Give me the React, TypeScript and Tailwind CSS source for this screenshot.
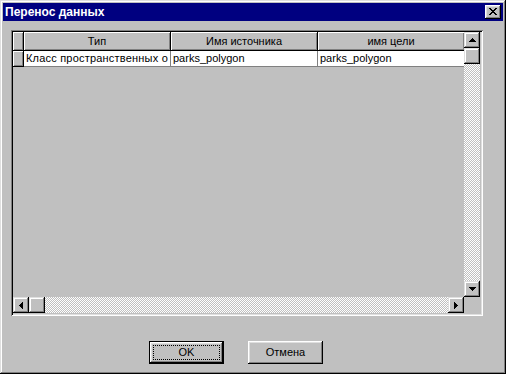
import React from "react";

const raised =
  "shadow-[inset_-1px_-1px_#000,inset_1px_1px_#dfdfdf,inset_-2px_-2px_#808080,inset_2px_2px_#fff]";
const btnBevel =
  "shadow-[inset_-1px_-1px_#000,inset_1px_1px_#fff,inset_-2px_-2px_#808080,inset_2px_2px_#dfdfdf]";
const checker =
  "bg-[image:repeating-conic-gradient(#c0c0c0_0_25%,#ffffff_0_50%)] bg-[length:2px_2px]";

function Arrow({ d, w, h }: { d: string; w: number; h: number }) {
  return (
    <svg width={w} height={h} viewBox={`0 0 ${w} ${h}`} shapeRendering="crispEdges">
      <path d={d} fill="#000" />
    </svg>
  );
}

const UP = "M3 0h1v1h1v1h1v1h1v1H0V3h1V2h1V1h1z";
const DOWN = "M0 0h7v1h-1v1h-1v1h-1v1h-1v-1h-1v-1h-1v-1h-1z";
const LEFT = "M3 0h1v7h-1v-1h-1v-1h-1v-1h-1v-1h1v-1h1v-1h1z";
const RIGHT = "M0 0h1v1h1v1h1v1h1v1h-1v1h-1v1h-1v1h-1z";

function ScrollBtn({ children }: { children?: React.ReactNode }) {
  return (
    <div className={`w-[16px] h-[16px] shrink-0 bg-[#c0c0c0] flex items-center justify-center ${raised}`}>
      {children}
    </div>
  );
}

function HeaderCell({ children, w }: { children?: React.ReactNode; w: string }) {
  return (
    <div
      className={`${w} h-full shrink-0 border-r border-b border-black bg-[#c0c0c0] shadow-[inset_1px_1px_#fff,inset_-1px_-1px_#808080] flex items-center justify-center text-[11px] text-black whitespace-nowrap overflow-hidden`}
    >
      {children}
    </div>
  );
}

function DataCell({ children, wide }: { children?: React.ReactNode; wide?: boolean }) {
  return (
    <div
      className={`w-[147px] h-full shrink-0 border-r border-b border-[#808080] bg-white flex items-center pl-[2px] text-[11px] text-black whitespace-nowrap overflow-hidden ${
        wide ? "tracking-[0.2px]" : ""
      }`}
    >
      {children}
    </div>
  );
}

export default function App() {
  return (
    <div
      className="w-[506px] h-[374px] bg-[#c0c0c0] p-[3px] flex flex-col font-['Liberation_Sans',Arial,sans-serif] shadow-[inset_-1px_-1px_#000,inset_1px_1px_#dfdfdf,inset_-2px_-2px_#808080,inset_2px_2px_#fff]"
    >
      {/* title bar */}
      <div className="h-[18px] bg-[#000080] flex items-center pl-[2px] pr-[2px] shrink-0">
        <span className="text-white font-bold text-[12px] leading-none">Перенос данных</span>
        <div className={`ml-auto w-[16px] h-[14px] bg-[#c0c0c0] flex items-center justify-center ${btnBevel}`}>
          <svg width="8" height="7" viewBox="0 0 8 7" shapeRendering="crispEdges" className="-mt-px">
            <path
              fill="#000"
              d="M0 0h2v1h-2z M6 0h2v1h-2z M1 1h2v1h-2z M5 1h2v1h-2z M2 2h4v1h-4z M3 3h2v1h-2z M2 4h4v1h-4z M1 5h2v1h-2z M5 5h2v1h-2z M0 6h2v1h-2z M6 6h2v1h-2z"
            />
          </svg>
        </div>
      </div>

      {/* body */}
      <div className="pl-[8px] pt-[9px] flex flex-col">
        {/* grid */}
        <div className="w-[472px] h-[286px] p-[2px] bg-[#c0c0c0] shadow-[inset_1px_1px_#808080,inset_-1px_-1px_#fff,inset_2px_2px_#000,inset_-2px_-2px_#dfdfdf]">
          <div className="flex flex-col w-[467px] h-[281px]">
            <div className="flex h-[265px]">
              <div className="w-[451px] h-full overflow-hidden flex flex-col">
                <div className="flex h-[19px] shrink-0">
                  <HeaderCell w="w-[11px]" />
                  <HeaderCell w="w-[147px]">Тип</HeaderCell>
                  <HeaderCell w="w-[147px]">Имя источника</HeaderCell>
                  <HeaderCell w="w-[147px]">имя цели</HeaderCell>
                </div>
                <div className="flex h-[16px] shrink-0">
                  <HeaderCell w="w-[11px]" />
                  <DataCell wide>Класс пространственных о</DataCell>
                  <DataCell>parks_polygon</DataCell>
                  <DataCell>parks_polygon</DataCell>
                </div>
              </div>
              <div className="w-[16px] h-full flex flex-col">
                <ScrollBtn>
                  <Arrow d={UP} w={7} h={4} />
                </ScrollBtn>
                <ScrollBtn />
                <div className={`flex-1 ${checker}`} />
                <ScrollBtn>
                  <Arrow d={DOWN} w={7} h={4} />
                </ScrollBtn>
              </div>
            </div>
            <div className="flex h-[16px]">
              <div className="w-[451px] h-full flex">
                <ScrollBtn>
                  <Arrow d={LEFT} w={4} h={7} />
                </ScrollBtn>
                <ScrollBtn />
                <div className={`flex-1 ${checker}`} />
                <ScrollBtn>
                  <Arrow d={RIGHT} w={4} h={7} />
                </ScrollBtn>
              </div>
              <div className="w-[16px] h-full bg-[#c0c0c0]" />
            </div>
          </div>
        </div>

        {/* buttons */}
        <div className="flex mt-[25px] ml-[138px] gap-[24px]">
          <div className="w-[75px] h-[23px] border border-black bg-[#c0c0c0]">
            <div className={`w-full h-full p-[3px] ${btnBevel}`}>
              <div className="w-full h-full border border-dotted border-black flex items-center justify-center text-[11px] text-black">
                OK
              </div>
            </div>
          </div>
          <div className={`w-[75px] h-[23px] bg-[#c0c0c0] flex items-center justify-center text-[11px] text-black ${btnBevel}`}>
            Отмена
          </div>
        </div>
      </div>
    </div>
  );
}
